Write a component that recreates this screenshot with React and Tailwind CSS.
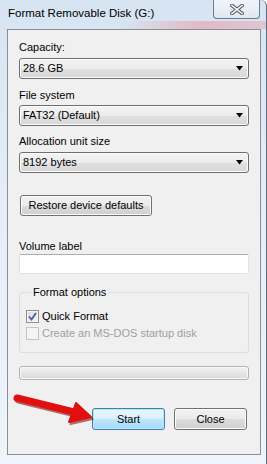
import React from 'react';

const font = { fontFamily: '"Liberation Sans", Arial, sans-serif' };

function Combo({ value }) {
  return (
    <div className="flex h-[21px] w-[230px] items-center justify-between rounded-[3px] border border-[#707070] bg-[linear-gradient(#f4f4f4_0%,#ececec_50%,#e0e0e0_51%,#d8d8d8_100%)] pl-[3px] pr-[4px] shadow-[inset_0_0_0_1px_#fbfbfb]">
      <span className="text-black">{value}</span>
      <svg width="9" height="5" viewBox="0 0 9 5"><path d="M1 0h7L4.5 4.5z" fill="#000" /></svg>
    </div>
  );
}

function WinButton({ children, primary, className = '' }) {
  return (
    <div
      className={`flex items-center justify-center rounded-[3px] border text-black ${
        primary
          ? 'border-[#3c7fb1] bg-[linear-gradient(#eaf6fd_0%,#d9f0fc_50%,#bee6fd_51%,#a7d9f5_100%)] shadow-[inset_0_0_0_1px_#b6e6fb]'
          : 'border-[#707070] bg-[linear-gradient(#f2f2f2_0%,#ebebeb_50%,#dddddd_51%,#cfcfcf_100%)] shadow-[inset_0_0_0_1px_#fcfcfc]'
      } ${className}`}
    >
      {children}
    </div>
  );
}

function Check({ checked, disabled, label }) {
  return (
    <div className="flex h-[17px] items-center">
      <div
        className={`flex h-[13px] w-[13px] items-center justify-center border ${
          disabled
            ? 'border-[#c5c5c5] bg-[#f4f4f4]'
            : 'border-[#8e8f8f] bg-[linear-gradient(135deg,#d8d8d8,#f8f8f8)] shadow-[inset_0_0_0_1px_#f4f4f4]'
        }`}
      >
        {checked && (
          <svg width="9" height="9" viewBox="0 0 9 9">
            <path d="M1 4.5l2.5 3L8 1" fill="none" stroke="#4a5f97" strokeWidth="1.8" />
          </svg>
        )}
      </div>
      <span className={`ml-[3px] ${disabled ? 'text-[#a0a0a0]' : 'text-black'}`}>{label}</span>
    </div>
  );
}

export default function App() {
  return (
    <div
      style={font}
      className="relative h-[464px] w-[267px] overflow-hidden rounded-tr-[6px] border-r border-[#5e6c7c] bg-[linear-gradient(180deg,#d6e4f2_0%,#e4edf7_40%,#eef4fa_100%)] text-[11px] leading-[15px]"
    >
      {/* title bar */}
      <div className="relative flex h-[29px] items-start bg-[linear-gradient(90deg,transparent_0%,transparent_45%,rgba(232,150,160,0.55)_75%,rgba(232,150,160,0.4)_100%)] bg-[length:100%_8px] bg-bottom bg-no-repeat">
        <span className="ml-[8px] mt-[6px] text-[11.5px] text-black">Format Removable Disk (G:)</span>
        <div className="ml-auto mr-[6px] flex h-[19px] w-[47px] items-center justify-center rounded-b-[4px] border border-t-0 border-[#6d7a88] bg-[linear-gradient(#f0f5fa,#dfe8f1)]">
          <svg width="14" height="11" viewBox="0 0 14 11">
            <path d="M2 1.5l10 8M12 1.5l-10 8" stroke="#5a6470" strokeWidth="3.6" strokeLinecap="square" />
            <path d="M2 1.5l10 8M12 1.5l-10 8" stroke="#ffffff" strokeWidth="1.6" strokeLinecap="square" />
          </svg>
        </div>
      </div>

      {/* client area */}
      <div className="ml-[7px] flex h-[426px] w-[254px] flex-col border border-[#8a8f96] bg-[#f0f0f0] pl-[11px] pt-[10px]">
        <div>Capacity:</div>
        <div className="mt-[3px]"><Combo value="28.6 GB" /></div>

        <div className="mt-[9px]">File system</div>
        <div className="mt-[2px]"><Combo value="FAT32 (Default)" /></div>

        <div className="mt-[8px]">Allocation unit size</div>
        <div className="mt-[3px]"><Combo value="8192 bytes" /></div>

        <WinButton className="ml-[1px] mt-[22px] h-[21px] w-[132px]">Restore device defaults</WinButton>

        <div className="mt-[23px]">Volume label</div>
        <div className="h-[20px] w-[230px] rounded-[2px] border border-[#dde3ea] border-t-[#abadb3] bg-white" />

        <fieldset className="mt-[11px] w-[230px] rounded-[3px] border border-[#d5dfe5] pb-[10px] pl-[6px]">
          <legend className="ml-[5px] px-[2px]">Format options</legend>
          <div className="mt-[8px]">
            <Check checked label="Quick Format" />
            <Check disabled label="Create an MS-DOS startup disk" />
          </div>
        </fieldset>

        <div className="mt-[13px] h-[14px] w-[230px] rounded-[3px] border border-[#b2b2b2] bg-[linear-gradient(#f3f3f3_0%,#e6e6e6_50%,#d9d9d9_100%)] shadow-[inset_0_0_0_1px_#f8f8f8]" />

        <div className="mt-[28px] flex w-[230px] justify-end gap-[9px] pr-[2px]">
          <WinButton primary className="h-[22px] w-[73px]">Start</WinButton>
          <WinButton className="h-[22px] w-[73px]">Close</WinButton>
        </div>
      </div>

      {/* red arrow annotation */}
      <svg className="absolute left-0 top-[388px]" width="100" height="45" viewBox="0 388 100 45">
        <defs>
          <linearGradient id="ar" x1="0" y1="0" x2="0" y2="1">
            <stop offset="0" stopColor="#ff3b30" />
            <stop offset="1" stopColor="#c80000" />
          </linearGradient>
        </defs>
        <g transform="translate(1.5 2)" fill="#7a0000" stroke="#7a0000" opacity="0.55">
          <line x1="17" y1="398" x2="74" y2="412" strokeWidth="7" strokeLinecap="round" />
          <path d="M76 403L91 417L69 422Z" strokeWidth="2" strokeLinejoin="round" />
        </g>
        <g fill="url(#ar)" stroke="url(#ar)">
          <line x1="17" y1="398" x2="74" y2="412" strokeWidth="7" strokeLinecap="round" stroke="#e01010" />
          <path d="M76 403L91 417L69 422Z" strokeWidth="2" strokeLinejoin="round" fill="#e01010" stroke="#e01010" />
        </g>
      </svg>
    </div>
  );
}
